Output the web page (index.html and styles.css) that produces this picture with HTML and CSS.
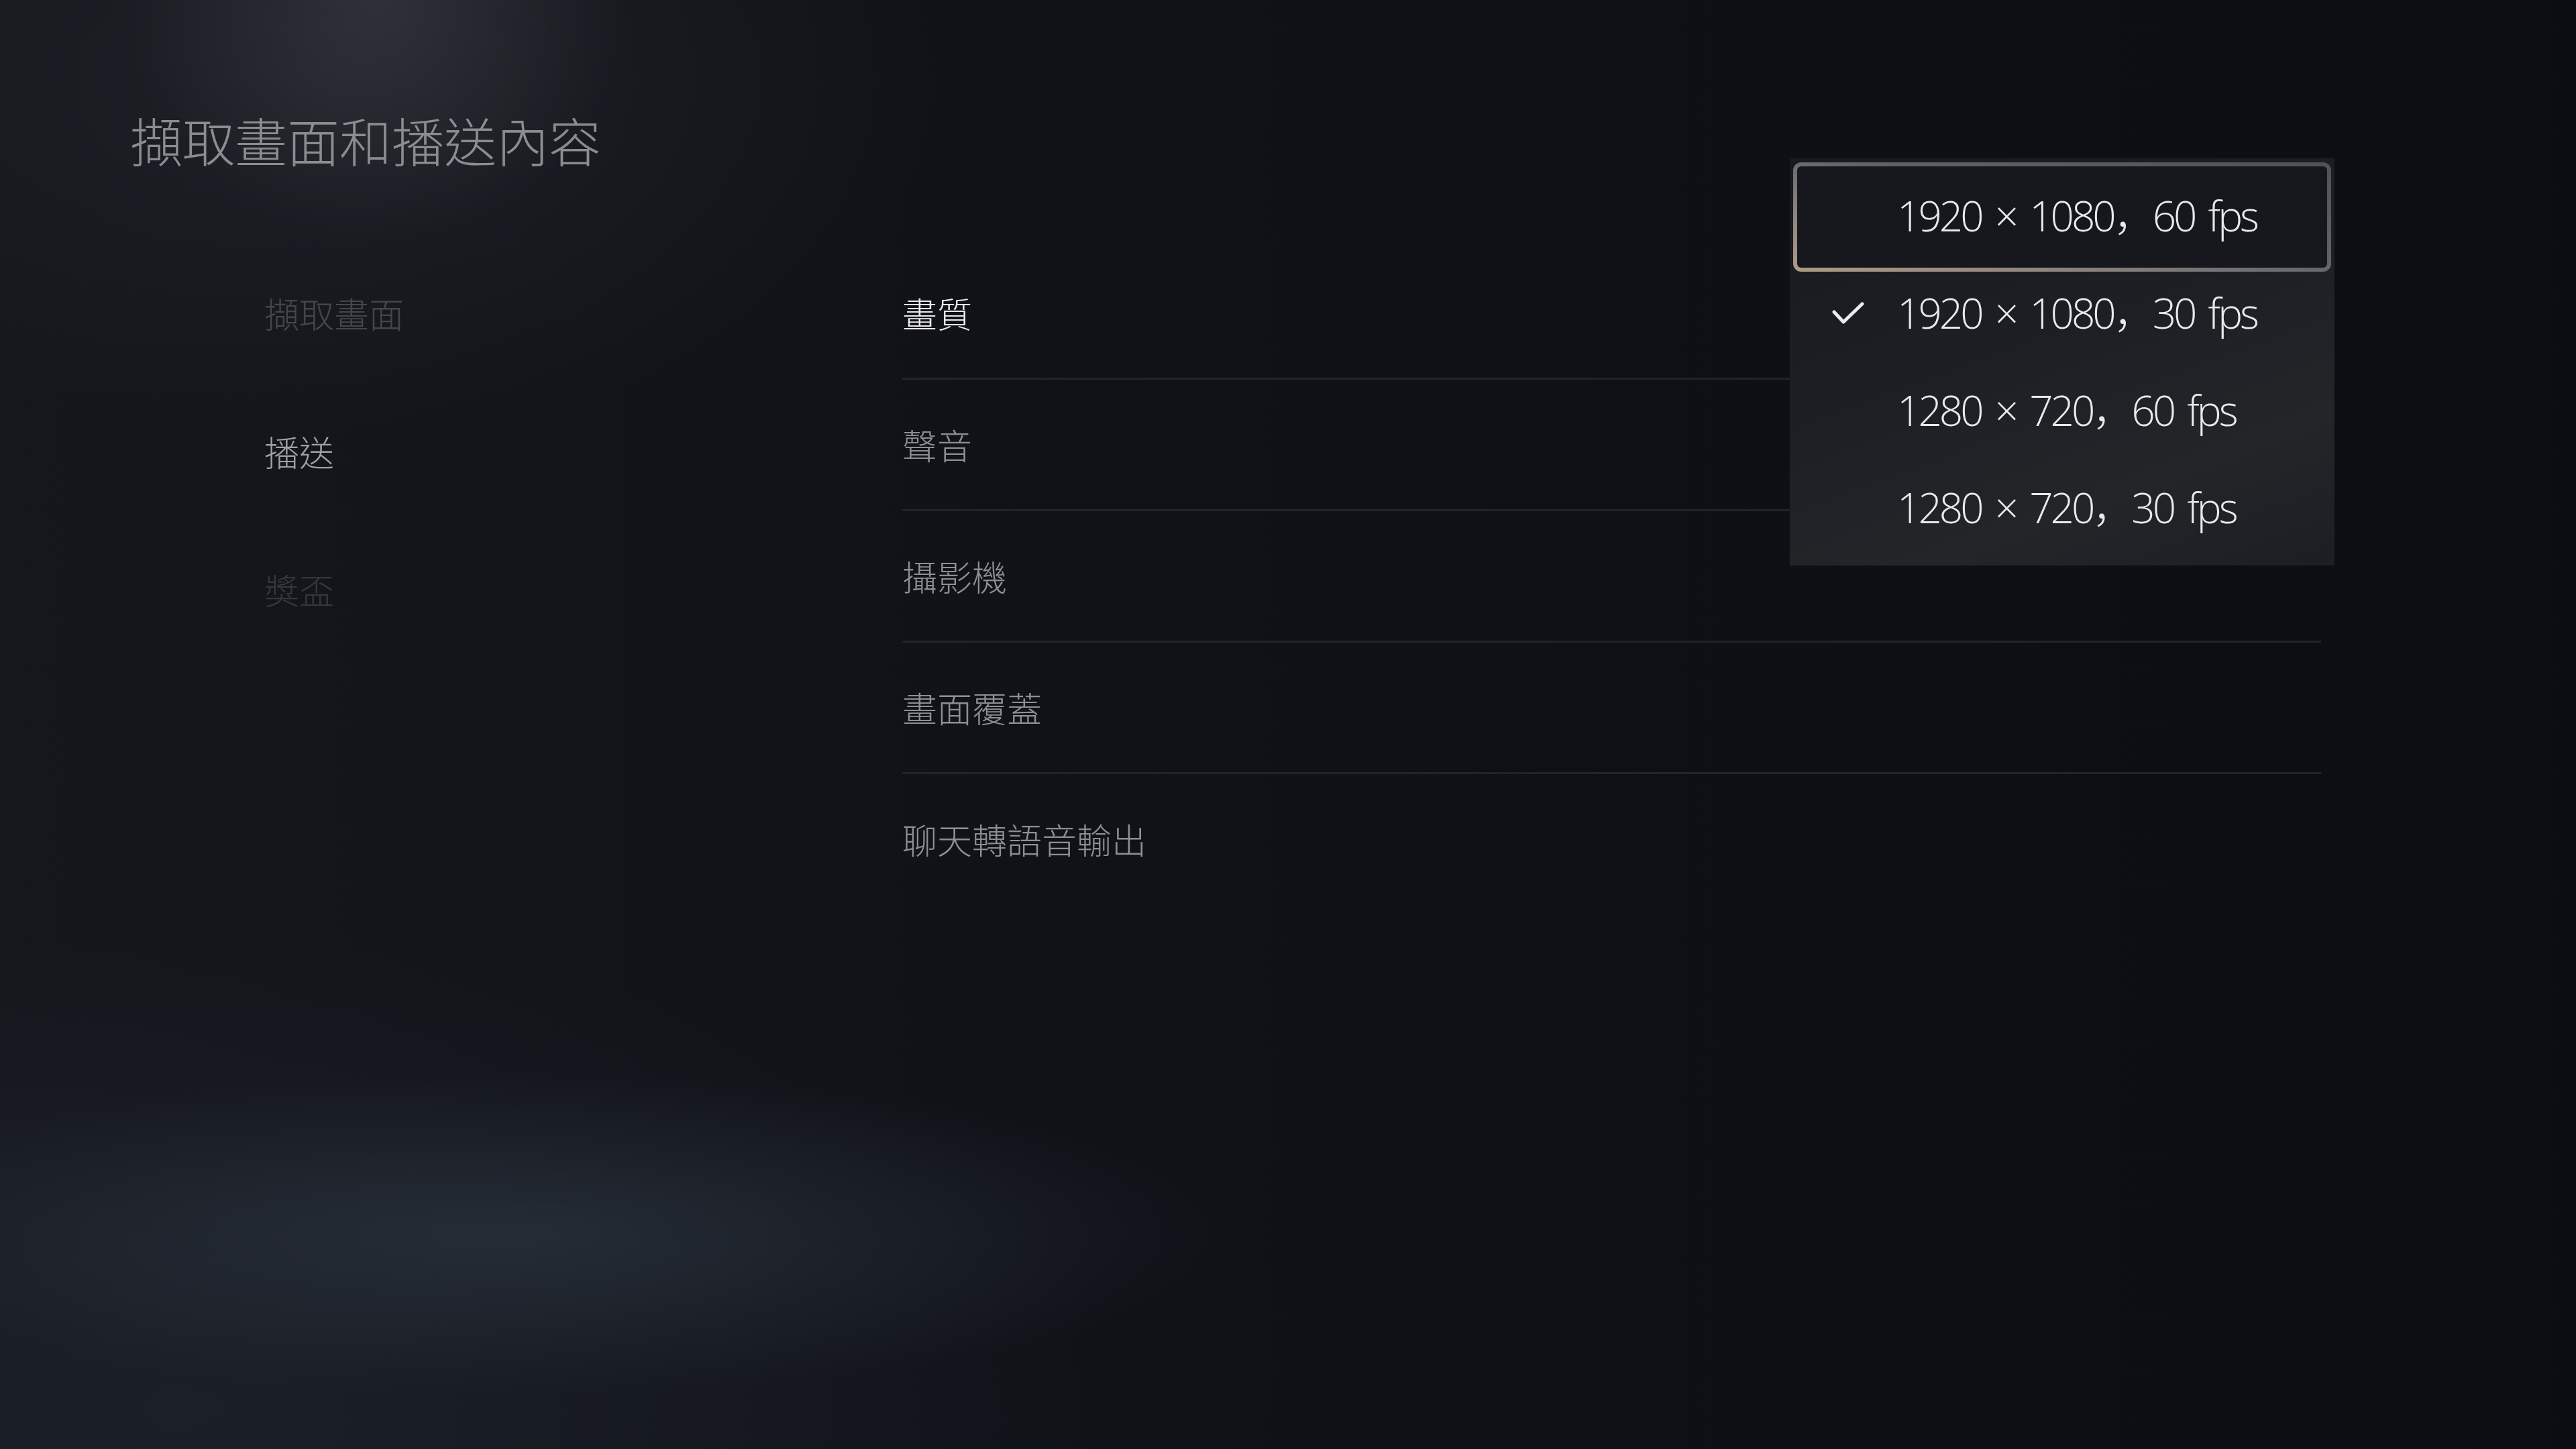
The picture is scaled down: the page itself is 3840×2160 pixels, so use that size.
FILE: index.html
```html
<!DOCTYPE html>
<html lang="zh-Hant">
<head>
<meta charset="utf-8">
<title>擷取畫面和播送內容</title>
<link rel="stylesheet" href="styles.css">
</head>
<body>
<div class="page">
  <h1 class="title">擷取畫面和播送內容</h1>
  <div class="content">
    <nav class="nav">
      <div class="nav-item dim">擷取畫面</div>
      <div class="nav-item active">播送</div>
      <div class="nav-item dimmer">獎盃</div>
    </nav>
    <div class="list">
      <div class="row focused">畫質</div>
      <div class="row">聲音</div>
      <div class="row">攝影機</div>
      <div class="row">畫面覆蓋</div>
      <div class="row last">聊天轉語音輸出</div>
    </div>
  </div>

  <div class="dropdown">
    <div class="option current">
      <span class="ring"></span>
      <span class="check"></span>
      <span class="label" lang="zh-Hans">1920 × 1080，60 fps</span>
    </div>
    <div class="option">
      <span class="check">
        <svg viewBox="0 0 48 33" width="48" height="33"><polyline points="3,15 17,30 45,3" fill="none" stroke="#ececec" stroke-width="5" stroke-linecap="round" stroke-linejoin="round"/></svg>
      </span>
      <span class="label" lang="zh-Hans">1920 × 1080，30 fps</span>
    </div>
    <div class="option">
      <span class="check"></span>
      <span class="label" lang="zh-Hans">1280 × 720，60 fps</span>
    </div>
    <div class="option">
      <span class="check"></span>
      <span class="label" lang="zh-Hans">1280 × 720，30 fps</span>
    </div>
  </div>
</div>
</body>
</html>
```
FILE: styles.css
```css
html, body {
  margin: 0;
  padding: 0;
}

body {
  width: 3840px;
  height: 2160px;
  overflow: hidden;
  background-color: #0d0f14;
  background-image:
    radial-gradient(ellipse 380px 360px at 560px 0px, rgba(66, 68, 76, 0.5), rgba(66, 68, 76, 0) 100%),
    radial-gradient(ellipse 900px 520px at 500px 120px, rgba(40, 42, 50, 0.5), rgba(40, 42, 50, 0) 100%),
    radial-gradient(ellipse 1100px 240px at 750px 1840px, rgba(50, 60, 72, 0.55), rgba(50, 60, 72, 0) 100%),
    radial-gradient(ellipse 1400px 700px at 300px 2100px, rgba(32, 38, 48, 0.6), rgba(32, 38, 48, 0) 100%),
    linear-gradient(90deg, #15171d 0%, #101218 40%, #0b0d12 100%);
  font-family: "Noto Sans CJK TC", "Noto Sans", sans-serif;
}

.page {
  position: relative;
  width: 3840px;
  height: 2160px;
  display: flex;
  flex-direction: column;
}

.title {
  margin: 0;
  padding: 163px 0 0 194px;
  font-size: 78px;
  line-height: 90px;
  font-weight: 300;
  color: #8b8c90;
  letter-spacing: 0;
}

.content {
  display: flex;
  margin-top: 117px;
}

.nav {
  display: flex;
  flex-direction: column;
  width: 951px;
  padding-left: 394px;
  margin-top: -7px;
}

.nav-item {
  height: 206px;
  display: flex;
  align-items: center;
  font-size: 52px;
  font-weight: 300;
  color: #45464b;
}

.nav-item.active {
  color: #a0a1a4;
}

.nav-item.dimmer {
  color: #35373c;
}

.list {
  display: flex;
  flex-direction: column;
  width: 2115px;
}

.row {
  height: 193px;
  display: flex;
  align-items: center;
  border-bottom: 3px solid #222429;
  font-size: 52px;
  font-weight: 300;
  color: #8e8f93;
}

.row.focused {
  color: #ebebeb;
}

.row.last {
  border-bottom: none;
}

.dropdown {
  position: absolute;
  left: 2668px;
  top: 236px;
  width: 812px;
  height: 607px;
  box-sizing: border-box;
  padding: 13px 0 14px;
  display: flex;
  flex-direction: column;
  background: linear-gradient(160deg, #17191e 0%, #1d1f24 45%, #232529 75%, #1c1e23 100%);
}

.option {
  position: relative;
  height: 145px;
  display: flex;
  align-items: center;
}

.ring {
  position: absolute;
  left: 5px;
  right: 5px;
  top: -7px;
  bottom: -11px;
  border-radius: 12px;
  border: 6px solid transparent;
  background:
    linear-gradient(#15171c, #16181d) padding-box,
    linear-gradient(12deg, #b09a86 0%, #8f8580 25%, #5e636b 55%, #4d525a 100%) border-box;
  box-sizing: border-box;
}

.check {
  position: relative;
  width: 48px;
  height: 33px;
  margin-left: 63px;
  margin-right: 49px;
  display: flex;
}

.check svg {
  display: block;
}

.label {
  position: relative;
  font-family: "Open Sans", "Noto Sans CJK SC", sans-serif;
  font-weight: 300;
  font-size: 62px;
  letter-spacing: -4px;
  word-spacing: 8px;
  color: #e9e9ea;
  white-space: pre;
  margin-top: -8px;
}
```
